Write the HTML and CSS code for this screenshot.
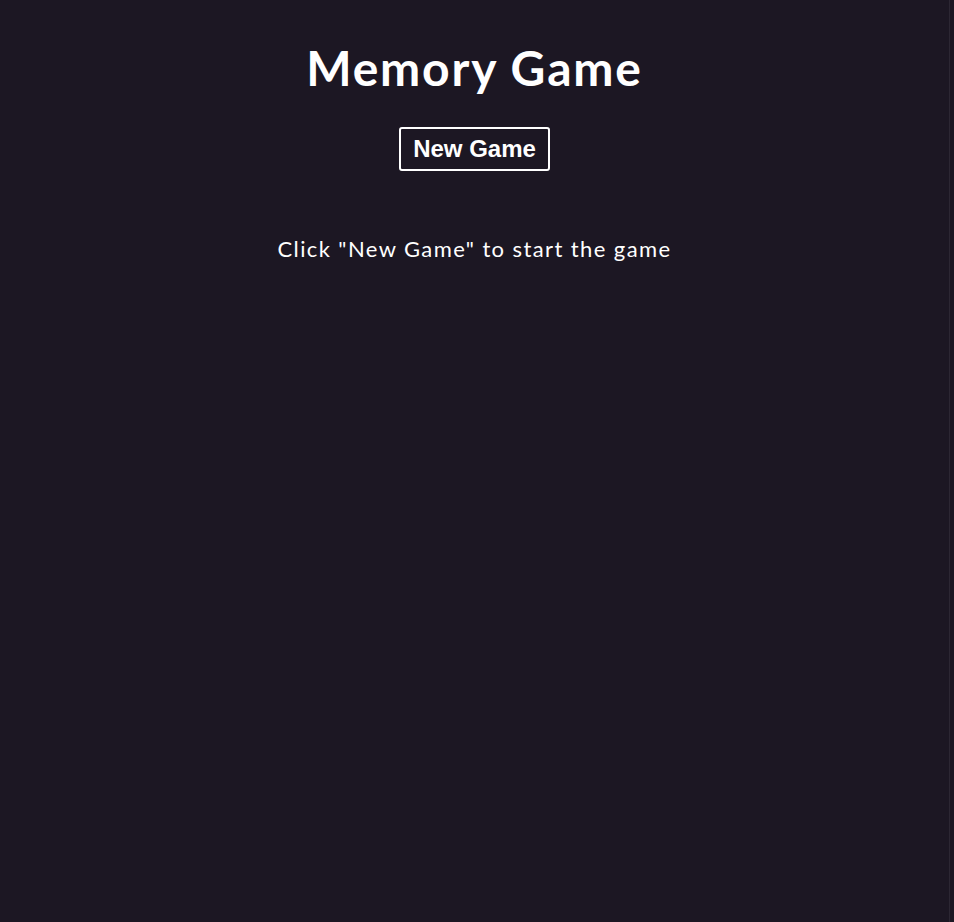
FILE: index.html
```html
<!DOCTYPE html>
<html lang="en">
<head>
<meta charset="utf-8">
<title>Memory Game</title>
<link rel="stylesheet" href="styles.css">
</head>
<body>
<div class="page">
  <main class="app">
    <h1 class="title">Memory Game</h1>
    <button class="new-game" type="button">New Game</button>
    <p class="message">Click "New Game" to start the game</p>
  </main>
  <div class="edge"></div>
</div>
</body>
</html>
```

FILE: styles.css
```css
html, body {
  margin: 0;
  padding: 0;
  height: 100%;
  background: #1c1723;
}
.page {
  display: flex;
  min-height: 100%;
}
.app {
  flex: 1;
  display: flex;
  flex-direction: column;
  align-items: center;
  color: #ffffff;
  font-family: Lato, "Open Sans", sans-serif;
  padding-top: 40px;
}
.edge {
  width: 1px;
  margin-right: 4px;
  background: #2c2733;
}
.title {
  margin: 0;
  font-size: 48px;
  font-weight: 700;
  line-height: 56px;
  letter-spacing: 1.8px;
}
.new-game {
  margin-top: 31px;
  height: 44px;
  padding: 0 12px;
  background: transparent;
  color: #ffffff;
  border: 2px solid #ffffff;
  border-radius: 3px;
  font-family: "Liberation Sans", Arial, sans-serif;
  font-weight: 700;
  font-size: 24px;
}
.message {
  margin: 64px 0 0;
  font-size: 22px;
  line-height: 28px;
  letter-spacing: 1.4px;
}
```
